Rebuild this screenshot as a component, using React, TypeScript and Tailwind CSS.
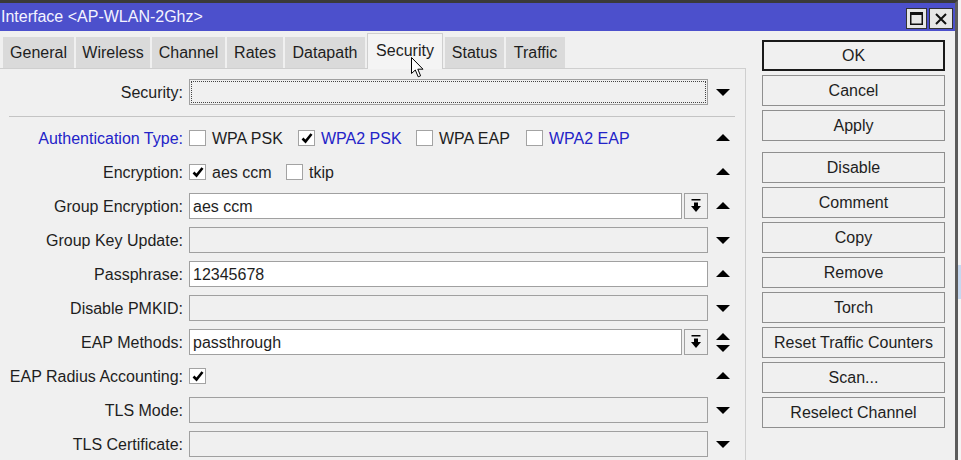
import React from "react"
import clsx from "clsx"

const tabs = [
  { name: "General", w: "w-[71px]" },
  { name: "Wireless", w: "w-[74px]" },
  { name: "Channel", w: "w-[73px]" },
  { name: "Rates", w: "w-[56px]" },
  { name: "Datapath", w: "w-[80px]" },
  { name: "Security", w: "w-[76px]", active: true },
  { name: "Status", w: "w-[59px]" },
  { name: "Traffic", w: "w-[59px]" },
]

function Up() {
  return (
    <svg width="14" height="8" viewBox="0 0 14 8">
      <polygon points="0,7 7,0 14,7" fill="#000" />
    </svg>
  )
}

function Down() {
  return (
    <svg width="14" height="8" viewBox="0 0 14 8">
      <polygon points="0,1 14,1 7,8" fill="#000" />
    </svg>
  )
}

function UpDown() {
  return (
    <div className="flex flex-col gap-[3px]">
      <Up />
      <Down />
    </div>
  )
}

function Check() {
  return (
    <svg width="12" height="12" viewBox="0 0 12 12">
      <path d="M1.5 6.5 L4.5 9.5 L10.5 2" stroke="#000" strokeWidth="2.6" fill="none" />
    </svg>
  )
}

function Box({ checked }: { checked?: boolean }) {
  return (
    <div className="w-[17px] h-[16px] bg-white border border-[#a3a3a3] flex items-center justify-center shrink-0">
      {checked && <Check />}
    </div>
  )
}

function Opt({ label, checked, blue, w }: { label: string; checked?: boolean; blue?: boolean; w: string }) {
  return (
    <div className={clsx("flex items-center", w)}>
      <Box checked={checked} />
      <span className={clsx("ml-[6px] mt-px", blue ? "text-[#2323c8]" : "text-[#1e1e1e]")}>{label}</span>
    </div>
  )
}

function Field({ value, white, dropdown, focus }: { value?: string; white?: boolean; dropdown?: boolean; focus?: boolean }) {
  return (
    <div className="flex items-center w-[519px]">
      <div
        className={clsx(
          "h-[26px] border border-[#a0a0a0] flex items-center pl-[3px] pt-px text-[#1e1e1e]",
          dropdown ? "w-[493px]" : "w-[519px]",
          white ? "bg-white" : "bg-[#f0f0f0]",
          focus && "outline-1 outline-dotted outline-[#444] -outline-offset-3"
        )}
      >
        {value}
      </div>
      {dropdown && (
        <div className="ml-[2px] w-[24px] h-[26px] border border-[#a0a0a0] bg-[#f0f0f0] flex items-center justify-center">
          <svg width="10" height="14" viewBox="0 0 10 14">
            <rect x="0.5" y="0" width="9" height="1.5" fill="#000" />
            <rect x="3" y="3.5" width="4" height="4" fill="#000" />
            <polygon points="0,7 10,7 5,13" fill="#000" />
          </svg>
        </div>
      )}
    </div>
  )
}

function Row({ label, blue, arrow, children }: { label: string; blue?: boolean; arrow: React.ReactNode; children: React.ReactNode }) {
  return (
    <div className="flex items-center h-[26px]">
      <div className={clsx("w-[183px] text-right whitespace-nowrap pt-px", blue ? "text-[#2323c8]" : "text-[#1e1e1e]")}>{label}</div>
      <div className="ml-[6px] w-[519px] flex items-center">{children}</div>
      <div className="ml-[8px] w-[14px] flex justify-center">{arrow}</div>
    </div>
  )
}

function Btn({ label, primary }: { label: string; primary?: boolean }) {
  return (
    <div
      className={clsx(
        "w-[183px] h-[31px] flex items-center justify-center pt-px bg-[#f0f0f0] text-[#1e1e1e]",
        primary ? "border-2 border-[#1a1a1a]" : "border border-[#8f8f8f]"
      )}
    >
      {label}
    </div>
  )
}

export default function App() {
  return (
    <div className="relative w-[961px] h-[460px] overflow-hidden bg-[#f4f4f4] flex font-['Liberation_Sans',Arial,sans-serif] text-[16px] leading-[18px]">
      <div className="w-[958px] h-full flex flex-col bg-[#f0f0f0] border-t-[3px] border-t-[#3a3a3a] border-r-[3px] border-r-[#5c5c5c]">
        {/* title bar */}
        <div className="h-[28px] bg-[#4c50cc] flex items-center pl-[1px] pr-[2px] shrink-0">
          <span className="text-[#f4f4ff]">Interface &lt;AP-WLAN-2Ghz&gt;</span>
          <div className="ml-auto flex gap-[2px] mt-[3px]">
            <div className="w-[21px] h-[21px] bg-[#e6e6e6] border border-[#333] flex items-center justify-center">
              <svg width="13" height="13" viewBox="0 0 13 13">
                <rect x="0.75" y="0.75" width="11.5" height="11.5" fill="none" stroke="#111" strokeWidth="1.5" />
                <rect x="0" y="0" width="13" height="3" fill="#111" />
              </svg>
            </div>
            <div className="w-[24px] h-[21px] bg-[#e6e6e6] border border-[#333] flex items-center justify-center">
              <svg width="12" height="12" viewBox="0 0 12 12">
                <path d="M1 1 L11 11 M11 1 L1 11" stroke="#111" strokeWidth="2" />
              </svg>
            </div>
          </div>
        </div>

        <div className="flex flex-1">
          {/* left: tabs + panel */}
          <div className="w-[746px] flex flex-col">
            <div className="h-[37px] flex items-end pl-[3px] gap-[2px] relative z-10">
              {tabs.map((t) => (
                <div
                  key={t.name}
                  className={clsx(
                    "flex items-center justify-center text-[#1e1e1e]",
                    t.w,
                    t.active
                      ? "h-[36px] -mb-px pb-[1px] bg-[#f4f4f4] border border-b-0 border-[#cfcfcf]"
                      : "h-[31px] pt-px bg-[#dadada]"
                  )}
                >
                  {t.name}
                </div>
              ))}
            </div>
            <div className="flex-1 border-t border-r border-[#cfcfcf] pt-[10px]">
              <Row label="Security:" arrow={<Down />}>
                <Field focus />
              </Row>
              <div className="ml-[9px] w-[726px] h-px bg-[#c4c4c4] mt-[11px] mb-[8px]" />
              <div className="flex flex-col gap-[8px]">
                <Row label="Authentication Type:" blue arrow={<Up />}>
                  <div className="flex items-center">
                    <Opt label="WPA PSK" w="w-[109px]" />
                    <Opt label="WPA2 PSK" checked blue w="w-[118px]" />
                    <Opt label="WPA EAP" w="w-[110px]" />
                    <Opt label="WPA2 EAP" blue w="w-[110px]" />
                  </div>
                </Row>
                <Row label="Encryption:" arrow={<Up />}>
                  <div className="flex items-center">
                    <Opt label="aes ccm" checked w="w-[97px]" />
                    <Opt label="tkip" w="w-[60px]" />
                  </div>
                </Row>
                <Row label="Group Encryption:" arrow={<Up />}>
                  <Field value="aes ccm" white dropdown />
                </Row>
                <Row label="Group Key Update:" arrow={<Down />}>
                  <Field />
                </Row>
                <Row label="Passphrase:" arrow={<Up />}>
                  <Field value="12345678" white />
                </Row>
                <Row label="Disable PMKID:" arrow={<Down />}>
                  <Field />
                </Row>
                <Row label="EAP Methods:" arrow={<UpDown />}>
                  <Field value="passthrough" white dropdown />
                </Row>
                <Row label="EAP Radius Accounting:" arrow={<Up />}>
                  <Box checked />
                </Row>
                <Row label="TLS Mode:" arrow={<Down />}>
                  <Field />
                </Row>
                <Row label="TLS Certificate:" arrow={<Down />}>
                  <Field />
                </Row>
              </div>
            </div>
          </div>

          {/* right: buttons */}
          <div className="ml-[16px] pt-[9px] flex flex-col">
            <div className="flex flex-col gap-[4px]">
              <Btn label="OK" primary />
              <Btn label="Cancel" />
              <Btn label="Apply" />
            </div>
            <div className="flex flex-col gap-[4px] mt-[11px]">
              <Btn label="Disable" />
              <Btn label="Comment" />
              <Btn label="Copy" />
              <Btn label="Remove" />
              <Btn label="Torch" />
              <Btn label="Reset Traffic Counters" />
              <Btn label="Scan..." />
              <Btn label="Reselect Channel" />
            </div>
          </div>
        </div>
      </div>

      {/* sliver of the window behind */}
      <div className="w-[3px] flex flex-col">
        <div className="h-[265px]" />
        <div className="h-[34px] bg-[#c6d8ef]" />
      </div>

      {/* mouse pointer */}
      <svg className="absolute left-[411px] top-[57px] z-20" width="14" height="21" viewBox="0 0 14 21">
        <path d="M0.5 0.5 L0.5 16.5 L4.3 13 L7.2 19.8 L9.6 18.8 L6.8 12.2 L12 12.2 Z" fill="#fff" stroke="#000" strokeWidth="1" />
      </svg>
    </div>
  )
}
